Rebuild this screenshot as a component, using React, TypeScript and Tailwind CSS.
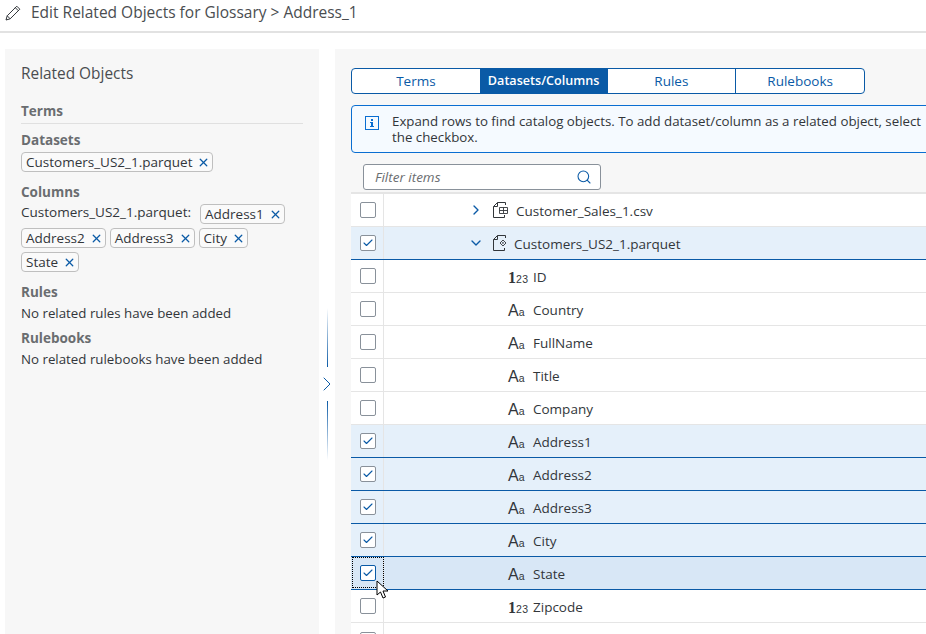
import { ChevronRight, ChevronDown, Search, X, Check } from "lucide-react";

type Row = {
  name: string;
  kind: "csv" | "parquet" | "num" | "text";
  checked?: boolean;
  focused?: boolean;
};

const rows: Row[] = [
  { name: "Customer_Sales_1.csv", kind: "csv" },
  { name: "Customers_US2_1.parquet", kind: "parquet", checked: true },
  { name: "ID", kind: "num" },
  { name: "Country", kind: "text" },
  { name: "FullName", kind: "text" },
  { name: "Title", kind: "text" },
  { name: "Company", kind: "text" },
  { name: "Address1", kind: "text", checked: true },
  { name: "Address2", kind: "text", checked: true },
  { name: "Address3", kind: "text", checked: true },
  { name: "City", kind: "text", checked: true },
  { name: "State", kind: "text", checked: true, focused: true },
  { name: "Zipcode", kind: "num" },
];

const tabs = ["Terms", "Datasets/Columns", "Rules", "Rulebooks"];

function Token({ label }: { label: string }) {
  return (
    <span className="inline-flex h-[20px] items-center rounded-[4px] border border-[#bfbfbf] bg-[#fafafa] pl-[4px] pr-[2px] text-[13.5px] text-[#32363a]">
      {label}
      <X className="ml-[5px] h-[13px] w-[13px] text-[#0a5aa6]" strokeWidth={2.4} />
    </span>
  );
}

function SectionTitle({ children }: { children: string }) {
  return <div className="text-[13.5px] font-bold leading-[18px] text-[#6a6d70]">{children}</div>;
}

function Checkbox({ checked, focused }: { checked?: boolean; focused?: boolean }) {
  return (
    <span
      className={`flex h-[16px] w-[16px] items-center justify-center rounded-[2px] border bg-white ${
        focused ? "border-[#0a5aa6]" : "border-[#89919a]"
      }`}
    >
      {checked && <Check className="h-[12px] w-[12px] text-[#0a5aa6]" strokeWidth={2.2} />}
    </span>
  );
}

function FileIcon({ kind }: { kind: "csv" | "parquet" }) {
  return (
    <svg width="16" height="16" viewBox="0 0 16 16" fill="none" stroke="#32363a" strokeWidth="1">
      <path d="M5.5.5H13.5V3M5.5.5L1.5 4.5V15.5H12.5V13" />
      <path d="M1.5 4.5H5.5V.5" />
      {kind === "csv" ? (
        <path d="M7.5 5.5H15.5V11.5H7.5ZM7.5 8.5H15.5M11.5 5.5V11.5" strokeWidth="0.9" />
      ) : (
        <path d="M11 5L14 8L11 11L8 8Z M11 7.3L11.7 8L11 8.7L10.3 8Z" strokeWidth="0.9" />
      )}
    </svg>
  );
}

function TypeIcon({ kind }: { kind: "num" | "text" }) {
  if (kind === "num") {
    return (
      <span className="flex w-[17px] items-baseline text-[#32363a]">
        <span className="font-['Liberation_Serif',serif] text-[16px] font-bold leading-none">1</span>
        <span className="font-['Liberation_Sans',sans-serif] text-[10.5px] leading-none tracking-[0.5px]">23</span>
      </span>
    );
  }
  return (
    <span className="flex w-[17px] items-baseline font-['Liberation_Sans',sans-serif] text-[#32363a]">
      <span className="text-[16px] leading-none">A</span>
      <span className="text-[10.5px] leading-none">a</span>
    </span>
  );
}

function TableRow({ row }: { row: Row }) {
  const folder = row.kind === "csv" || row.kind === "parquet";
  const bg = row.focused ? "bg-[#d8e7f6]" : row.checked ? "bg-[#e5f0fa]" : "bg-white";
  const line = row.checked ? "border-[#0a5aa6]" : "border-[#e5e5e5]";
  return (
    <div className={`relative flex h-[33px] shrink-0 border-b ${bg} ${line}`}>
      <div className="flex w-[33px] shrink-0 items-center justify-center border-r border-[#e5e5e5] pl-[1px]">
        <Checkbox checked={row.checked} focused={row.focused} />
      </div>
      {row.focused && (
        <span className="absolute bottom-[1px] left-[1px] top-0 w-[32px] border border-dotted border-black" />
      )}
      {folder ? (
        <div className="flex items-center">
          {row.kind === "csv" ? (
            <ChevronRight className="ml-[84px] h-[16px] w-[16px] text-[#0a5aa6]" strokeWidth={2} />
          ) : (
            <ChevronDown className="ml-[84px] h-[16px] w-[16px] text-[#0a5aa6]" strokeWidth={2} />
          )}
          <span className="ml-[8px]">
            <FileIcon kind={row.kind as "csv" | "parquet"} />
          </span>
          <span className={`${row.kind === "csv" ? "ml-[8px]" : "ml-[6px]"} mt-[2px] text-[13.5px] text-[#32363a]`}>
            {row.name}
          </span>
        </div>
      ) : (
        <div className="ml-[124px] flex items-center">
          <span className="mt-[3px]">
            <TypeIcon kind={row.kind as "num" | "text"} />
          </span>
          <span className="ml-[8px] mt-[2px] text-[13.5px] text-[#32363a]">{row.name}</span>
        </div>
      )}
    </div>
  );
}

export default function App() {
  return (
    <div className="flex h-[634px] w-[926px] flex-col overflow-hidden bg-white font-['Open_Sans',sans-serif] text-[#32363a]">
      {/* Header */}
      <header className="flex h-[33px] shrink-0 items-center border-b-2 border-[#e2e2e2] pb-[6px] pl-[5px]">
        <svg width="16" height="16" viewBox="0 0 16 16" fill="none" stroke="#32363a" strokeWidth="1">
          <path d="M1 15L2.2 10.8L11.8 1.2L14.8 4.2L5.2 13.8ZM2.2 10.8L5.2 13.8M10.3 2.7L13.3 5.7" />
        </svg>
        <h1 className="ml-[10px] text-[15.5px] font-normal leading-none text-[#4a4d50]">
          Edit Related Objects for Glossary &gt; Address_1
        </h1>
      </header>

      <div className="flex min-h-0 flex-1 pl-[5px] pt-[16px]">
        {/* Related objects */}
        <aside className="w-[314px] shrink-0 bg-[#f7f7f7] pl-[16px] pr-[16px] pt-[15px]">
          <h2 className="text-[15.4px] font-normal leading-[20px] text-[#4a4d50]">Related Objects</h2>
          <div className="mt-[18px] border-b border-[#e0e0e0] pb-[3px]">
            <SectionTitle>Terms</SectionTitle>
          </div>
          <div className="mt-[7px]">
            <SectionTitle>Datasets</SectionTitle>
          </div>
          <div className="mt-[3px] flex">
            <Token label="Customers_US2_1.parquet" />
          </div>
          <div className="mt-[11px]">
            <SectionTitle>Columns</SectionTitle>
          </div>
          <div className="mt-[3px] flex flex-wrap items-start gap-x-[4px] gap-y-[4px]">
            <span className="mr-[5px] text-[13.5px] leading-[16px] text-[#32363a]">Customers_US2_1.parquet:</span>
            <Token label="Address1" />
            <Token label="Address2" />
            <Token label="Address3" />
            <Token label="City" />
            <div className="flex h-[20px] basis-full">
              <Token label="State" />
            </div>
          </div>
          <div className="mt-[11px]">
            <SectionTitle>Rules</SectionTitle>
          </div>
          <p className="mt-[3px] text-[13.3px] leading-[18px]">No related rules have been added</p>
          <div className="mt-[7px]">
            <SectionTitle>Rulebooks</SectionTitle>
          </div>
          <p className="mt-[3px] text-[13.3px] leading-[18px]">No related rulebooks have been added</p>
        </aside>

        {/* Splitter */}
        <div className="flex w-[16px] shrink-0 flex-col items-center bg-white pt-[259px]">
          <span className="h-[59px] w-px shrink-0 bg-gradient-to-b from-transparent to-[#0a5aa6]" />
          <ChevronRight className="my-[5px] h-[24px] w-[24px] shrink-0 text-[#0a5aa6]" strokeWidth={1} />
          <span className="h-[59px] w-px shrink-0 bg-gradient-to-t from-transparent to-[#0a5aa6]" />
        </div>

        {/* Catalog browser */}
        <main className="min-w-0 flex-1 overflow-hidden bg-[#f7f7f7] pl-[16px] pt-[19px]">
          <div className="flex h-[26px] w-[514px] rounded-[4px] border border-[#0a5aa6] bg-white">
            {tabs.map((tab, i) => (
              <button
                key={tab}
                className={`flex flex-1 items-center justify-center ${
                  i === 1 ? "bg-[#0a5aa6] text-[12.6px] font-semibold text-white" : "text-[13.5px] text-[#0a5aa6]"
                } ${i === 3 ? "rounded-r-[4px] border-l border-[#0a5aa6]" : ""}`}
              >
                {tab}
              </button>
            ))}
          </div>

          <div className="mt-[11px] flex h-[48px] w-[620px] rounded-[4px] border border-[#0a6ed1] bg-[#f5faff] pl-[13px] pt-[7px]">
            <svg className="mt-[3px] shrink-0" width="14" height="14" viewBox="0 0 14 14" fill="none">
              <rect x="0.5" y="0.5" width="13" height="13" stroke="#0a6ed1" />
              <path d="M6 3h2v2H6ZM5 6h3v4h1v1H5v-1h1V7H5Z" fill="#0a6ed1" />
            </svg>
            <p className="ml-[13px] w-[532px] text-[13.3px] leading-[16px] text-[#32363a]">
              Expand rows to find catalog objects. To add dataset/column as a related object, select the checkbox.
            </p>
          </div>

          <div className="ml-[12px] mt-[11px] flex h-[26px] w-[238px] items-center justify-between rounded-[3px] border border-[#89919a] bg-white pl-[11px] pr-[8px]">
            <span className="text-[13.5px] italic text-[#6a6d70]">Filter items</span>
            <Search className="h-[16px] w-[16px] text-[#0a5aa6]" strokeWidth={1.6} />
          </div>

          <div className="mt-[2px] flex flex-col border-t-2 border-[#e5e5e5]">
            {rows.map((row, i) => (
              <TableRow key={i} row={row} />
            ))}
            {/* row cut by the bottom of the window */}
            <div className="flex h-[33px] shrink-0 bg-white">
              <div className="flex w-[33px] shrink-0 items-center justify-center border-r border-[#e5e5e5] pl-[1px]">
                <Checkbox />
              </div>
            </div>
          </div>
        </main>
      </div>

      {/* Mouse pointer from the capture */}
      <svg className="absolute left-[376px] top-[580px]" width="14" height="20" viewBox="0 0 14 20">
        <path d="M1 1V15L4.5 12L7 18L9.5 17L7 11H12Z" fill="white" stroke="black" strokeWidth="1" />
      </svg>
    </div>
  );
}
